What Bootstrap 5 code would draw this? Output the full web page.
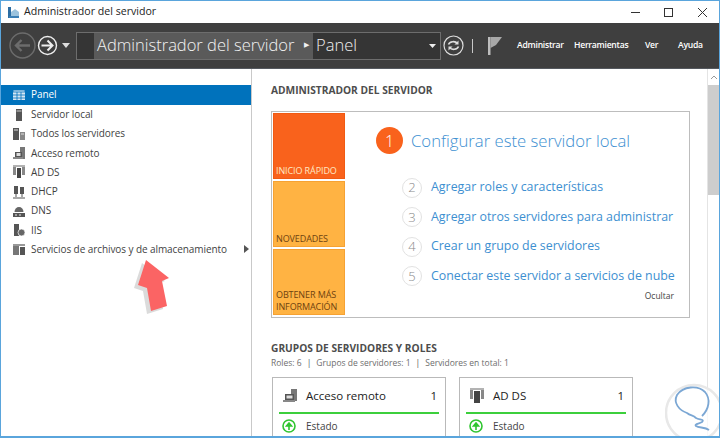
<!DOCTYPE html>
<html lang="es">
<head>
<meta charset="UTF-8">
<title>Administrador del servidor</title>
<link href="https://cdn.jsdelivr.net/npm/bootstrap@5.3.0/dist/css/bootstrap.min.css" rel="stylesheet">
<style>
html, body { height: 100%; overflow: hidden; background: #fff; }
body { font-family: "Open Sans", "Noto Sans", sans-serif; color: #3c3c3c; }
.win { width: 720px; height: 438px; border: 1px solid #5aa5dc; border-bottom-width: 2px; position: relative; overflow: hidden; }
.titlebar { height: 22px; padding-left: 6px; font-size: 10.6px; color: #222; white-space: nowrap; }
.winbtns { margin-left: auto; }
.winbtn { width: 33.5px; height: 22px; }
.toolbar { height: 46px; background: #3f3f3f; border-bottom: 1px solid #55595f; color: #fff; padding-left: 8px; white-space: nowrap; }
.fwd-btn { margin-left: 1px; }
.crumb { width: 365px; height: 28px; margin-left: 6px; border: 1px solid #6d6d6d; background: #353535; font-size: 16.5px; font-weight: 300; color: #f2f2f2; flex: none; }
.crumb-gap { width: 17px; flex: none; }
.crumb-on { background: #5a5a5a; height: 100%; padding: 0 4px 0 3px; width: 219px; flex: none; }
.crumb-sep { font-size: 7px; }
.crumb-last { padding-left: 3px; }
.crumb-drop { margin-left: auto; margin-right: 4px; }
.refresh-btn { margin-left: 2px; }
.tb-sep { width: 1px; height: 14px; background: #c8c8c8; margin: 0 15px 0 8px; }
.tb-menu { font-size: 8.6px; color: #fff; font-weight: 600; letter-spacing: -.25px; flex: none; }
.tb-menus { margin-left: 15px; }
.tb-menus span:nth-child(1) { width: 46px; }
.tb-menus span:nth-child(2) { width: 52px; margin-left: 11px; }
.tb-menus span:nth-child(3) { width: 13px; margin-left: 19px; }
.tb-menus span:nth-child(4) { width: 25px; margin-left: 20px; }
.bodyrow { height: 369px; }
.sidebar { width: 251px; flex: none; border-right: 1px solid #c9c9c9; padding-top: 15.5px; }
.sideitem { height: 19.25px; padding-left: 11px; font-size: 10px; color: #3f3f3f; gap: 5px; letter-spacing: -.08px; white-space: nowrap; }
.sideitem svg { flex: none; width: 14px; height: 14px; }
.sideitem.on { height: 20px; background: #0072bc; color: #fff; margin-bottom: .5px; }
.side-caret { margin-left: auto; margin-right: 2px; width: 0; height: 0; border-left: 5px solid #555; border-top: 4px solid transparent; border-bottom: 4px solid transparent; }
.mainpane { width: 455px; flex: none; padding: 15px 0 0 19px; }
.h-sec { font-size: 10.2px; font-weight: 700; color: #4d4d4d; line-height: 12px; margin: 0; }
.quickbox { width: 419px; height: 207px; border: 1px solid #bdbdbd; margin-top: 15px; padding: 1px; }
.tiles { width: 72px; flex: none; gap: 2px; }
.tile { height: 66px; background: #ffb343; border: 1px solid #f6a233; color: #6e4210; font-size: 9px; line-height: 12px; padding: 0 2px 1px; letter-spacing: -.1px; }
.tile.hot { background: #f9621c; border-color: #f15a12; color: #ffe9c4; }
.quickbody { padding: 14px 0 0 32px; white-space: nowrap; }
.steprow { color: #3d8fd1; font-size: 12.4px; gap: 9px; height: 29.5px; margin-left: 25px; }
.stepnum { width: 20px; height: 20px; border: 1px solid #e2e2e2; border-radius: 50%; color: #8a8a8a; font-size: 13px; font-weight: 300; flex: none; }
.steprow.first { font-size: 16.7px; font-weight: 300; height: 27px; gap: 8px; margin-bottom: 19px; margin-left: -1px; }
.steprow.first .stepnum { width: 27px; height: 27px; background: #f9621c; border: 0; color: #fff; font-size: 16px; }
.hidelink { font-size: 8.5px; color: #444; text-align: right; padding-right: 14px; margin-top: -1px; }
.sub-sec { font-size: 8.5px; color: #6e6e6e; margin-top: 3px; line-height: 12px; }
.sub-sec i { font-style: normal; margin: 0 5px; color: #555; }
.rolecards { gap: 13px; margin: 8px 0 0 1px; }
.rolecard { width: 174px; height: 70px; border: 1px solid #b9b9b9; border-bottom: 0; padding: 0 6px; }
.rolehead { height: 36px; border-bottom: 2px solid #3ccf3c; font-size: 11.5px; color: #222; padding: 2px 2px 0 3px; gap: 8px; }
.rolehead svg { width: 16px; height: 16px; flex: none; }
.rolehead b { font-weight: 400; margin-left: auto; }
.rolestate { font-size: 10px; color: #444; height: 24px; gap: 10px; padding-left: 3px; }
.okdot { width: 14px; height: 14px; flex: none; }
.scroller { width: 12px; flex: none; border-left: 1px solid #e4e4e4; }
.sc-up { height: 16px; }
.sc-thumb { height: 110px; background: #cdcdcd; }
.arrow-over { position: absolute; left: 129px; top: 254px; width: 48px; height: 66px; }
.logo-over { position: absolute; left: 664px; top: 382px; width: 60px; height: 60px; }
</style>
</head>
<body>
<div class="win">
  <div class="titlebar d-flex align-items-center">
    <svg width="13" height="13" viewBox="0 0 13 13" class="me-1"><path d="M1 1h3v11H1z" fill="#2c6da3"/><path d="M4 6l4-3 4 3v5H4z" fill="#9cc3dd"/><path d="M2 10h10v2H2z" fill="#3b7fb5"/></svg>
    <span>Administrador del servidor</span>
    <div class="winbtns d-flex">
      <div class="winbtn d-flex align-items-center justify-content-center"><svg width="11" height="11"><path d="M1 5.5h9" stroke="#333"/></svg></div>
      <div class="winbtn d-flex align-items-center justify-content-center"><svg width="11" height="11"><rect x="1.5" y="1.5" width="8" height="8" fill="none" stroke="#333"/></svg></div>
      <div class="winbtn d-flex align-items-center justify-content-center"><svg width="11" height="11"><path d="M1 1l9 9M10 1l-9 9" stroke="#333"/></svg></div>
    </div>
  </div>

  <div class="toolbar d-flex align-items-center">
    <svg width="27" height="27" viewBox="0 0 27 27"><circle cx="13.5" cy="13.5" r="12.5" fill="none" stroke="#6c6c6c" stroke-width="1.4"/><path d="M21 13.5H7M12.5 8l-5.5 5.5 5.5 5.5" fill="none" stroke="#6c6c6c" stroke-width="2.4"/></svg>
    <svg width="21" height="21" viewBox="0 0 21 21" class="fwd-btn"><circle cx="10.5" cy="10.5" r="9" fill="none" stroke="#eee" stroke-width="1.4"/><path d="M4.5 10.5h11M10.5 5.5l5 5-5 5" fill="none" stroke="#eee" stroke-width="2"/></svg>
    <svg width="8" height="5" class="ms-1"><path d="M0 0h8L4 5z" fill="#ddd"/></svg>
    <div class="crumb d-flex align-items-center">
      <div class="crumb-gap"></div>
      <div class="crumb-on d-flex align-items-center"><span>Administrador del servidor</span><span class="crumb-sep ms-auto">&#9654;</span></div>
      <span class="crumb-last">Panel</span>
      <svg class="crumb-drop" width="7" height="4"><path d="M0 0h7L3.5 4z" fill="#eee"/></svg>
    </div>
    <svg width="21" height="21" viewBox="0 0 21 21" class="refresh-btn"><circle cx="10.5" cy="10.5" r="9.5" fill="none" stroke="#ddd" stroke-width="1.2"/><path d="M5.5 9.5a5 4 0 0 1 9-1M15.5 11.5a5 4 0 0 1-9 1" fill="none" stroke="#ddd" stroke-width="1.6"/><path d="M15.5 5.5v4h-4zM5.5 15.5v-4h4z" fill="#ddd"/></svg>
    <div class="tb-sep"></div>
    <svg width="14" height="18" viewBox="0 0 14 18"><path d="M0 0h2.5v18H0z" fill="#bdbdbd"/><path d="M2.5 0H14L8 8 2.5 11z" fill="#a8a8a8"/></svg>
    <div class="tb-menus d-flex">
      <span class="tb-menu">Administrar</span>
      <span class="tb-menu">Herramientas</span>
      <span class="tb-menu">Ver</span>
      <span class="tb-menu">Ayuda</span>
    </div>
  </div>

  <div class="bodyrow d-flex">
    <div class="sidebar">
      <div class="sideitem on d-flex align-items-center"><svg viewBox="0 0 14 14"><path d="M1 2h12v10H1z" fill="#d5e6f3"/><path d="M1 2h12v2H1zM5 4v8M9 4v8M1 7h12M1 10h12" stroke="#0072bc" stroke-width=".8" fill="none"/></svg>Panel</div>
      <div class="sideitem d-flex align-items-center"><svg viewBox="0 0 14 14"><path d="M4 1h6v12H4z" fill="#555"/><path d="M4.500 3h5" stroke="#ccc"/></svg>Servidor local</div>
      <div class="sideitem d-flex align-items-center"><svg viewBox="0 0 14 14"><path d="M1 1h6v12H1z" fill="#555"/><path d="M8 5h5v8H8z" fill="#888"/><path d="M2 3h4M9 7h3" stroke="#ddd"/></svg>Todos los servidores</div>
      <div class="sideitem d-flex align-items-center"><svg viewBox="0 0 14 14"><path d="M8 1h5v12H8z" fill="#777"/><path d="M3 6h7v5H3z" fill="#555"/><path d="M1 11h10v2H1z" fill="#888"/><path d="M4.5 7h4v3h-4z" fill="#ddd"/></svg>Acceso remoto</div>
      <div class="sideitem d-flex align-items-center"><svg viewBox="0 0 14 14"><path d="M1 2h3v8H1zM10 2h3v8h-3z" fill="#888"/><path d="M5 3h4v10H5z" fill="#444"/><path d="M1 1h12" stroke="#666"/></svg>AD DS</div>
      <div class="sideitem d-flex align-items-center"><svg viewBox="0 0 14 14"><path d="M2 1h4v8H2zM8 2h4v7H8z" fill="#555"/><path d="M4 9v3M1 13h6M10 9v3M7 13h6" stroke="#555"/></svg>DHCP</div>
      <div class="sideitem d-flex align-items-center"><svg viewBox="0 0 14 14"><path d="M2.500 8a4.500 5 0 0 1 9 0z" fill="#666"/><path d="M1 9h12v4H1z" fill="#555"/><path d="M3 11h2M7 11h2" stroke="#eee"/></svg>DNS</div>
      <div class="sideitem d-flex align-items-center"><svg viewBox="0 0 14 14"><path d="M2 1h5v12H2z" fill="#555"/><circle cx="9.500" cy="9.500" r="3.500" fill="#666" stroke="#fff" stroke-width=".7"/></svg>IIS</div>
      <div class="sideitem d-flex align-items-center"><svg viewBox="0 0 14 14"><path d="M1 2h6v11H1z" fill="#777"/><path d="M1 2h12v2H1z" fill="#999"/><path d="M8 5h5v8H8z" fill="#555"/></svg>Servicios de archivos y de almacenamiento<span class="side-caret"></span></div>
    </div>

    <div class="mainpane">
      <h2 class="h-sec">ADMINISTRADOR DEL SERVIDOR</h2>
      <div class="quickbox d-flex">
        <div class="tiles d-flex flex-column">
          <div class="tile hot d-flex align-items-end">INICIO RÁPIDO</div>
          <div class="tile d-flex align-items-end">NOVEDADES</div>
          <div class="tile d-flex align-items-end">OBTENER MÁS INFORMACIÓN</div>
        </div>
        <div class="quickbody flex-grow-1">
          <div class="steprow first d-flex align-items-center"><span class="stepnum d-flex align-items-center justify-content-center">1</span>Configurar este servidor local</div>
          <div class="steprow d-flex align-items-center"><span class="stepnum d-flex align-items-center justify-content-center">2</span>Agregar roles y características</div>
          <div class="steprow d-flex align-items-center"><span class="stepnum d-flex align-items-center justify-content-center">3</span>Agregar otros servidores para administrar</div>
          <div class="steprow d-flex align-items-center"><span class="stepnum d-flex align-items-center justify-content-center">4</span>Crear un grupo de servidores</div>
          <div class="steprow d-flex align-items-center"><span class="stepnum d-flex align-items-center justify-content-center">5</span>Conectar este servidor a servicios de nube</div>
          <div class="hidelink">Ocultar</div>
        </div>
      </div>
      <h2 class="h-sec mt-4">GRUPOS DE SERVIDORES Y ROLES</h2>
      <div class="sub-sec">Roles: 6<i>|</i>Grupos de servidores: 1<i>|</i>Servidores en total: 1</div>
      <div class="rolecards d-flex">
        <div class="rolecard">
          <div class="rolehead d-flex align-items-center"><svg viewBox="0 0 16 16"><path d="M9 1h6v12H9z" fill="#777"/><path d="M3 6h9v6H3z" fill="#555"/><path d="M1 12h12v2H1z" fill="#888"/><path d="M4.500 7.500h6v3h-6z" fill="#ddd"/></svg>Acceso remoto<b>1</b></div>
          <div class="rolestate d-flex align-items-center"><svg class="okdot" viewBox="0 0 14 14"><circle cx="7" cy="7" r="6" fill="none" stroke="#2fc52f" stroke-width="1.600"/><path d="M7 11V6M4.500 7L7 4l2.500 3z" stroke="#2fc52f" stroke-width="1.600" fill="#2fc52f"/></svg>Estado</div>
        </div>
        <div class="rolecard">
          <div class="rolehead d-flex align-items-center"><svg viewBox="0 0 16 16"><path d="M1 2h3v9H1zM12 2h3v9h-3z" fill="#888"/><path d="M5 3h6v12H5z" fill="#444"/><path d="M1 1h14" stroke="#666"/></svg>AD DS<b>1</b></div>
          <div class="rolestate d-flex align-items-center"><svg class="okdot" viewBox="0 0 14 14"><circle cx="7" cy="7" r="6" fill="none" stroke="#2fc52f" stroke-width="1.600"/><path d="M7 11V6M4.500 7L7 4l2.500 3z" stroke="#2fc52f" stroke-width="1.600" fill="#2fc52f"/></svg>Estado</div>
        </div>
      </div>
    </div>

    <div class="scroller">
      <div class="sc-up d-flex align-items-center justify-content-center"><svg width="8" height="5"><path d="M1 4l3-3 3 3" fill="none" stroke="#999"/></svg></div>
      <div class="sc-thumb"></div>
    </div>
  </div>

  <svg class="arrow-over" viewBox="0 0 48 66"><path d="M16 5L39 23 32 26 37 51 21 56 17 33 8 30z" fill="#999" opacity=".35" transform="translate(-4 3)"/><path d="M16 5L39 23 32 26 37 51 21 56 17 33 8 30z" fill="#fb6464"/></svg>
  <svg class="logo-over" viewBox="0 0 60 60"><circle cx="29" cy="30" r="28" fill="#fff" fill-opacity=".75" stroke="#e8e8e8" stroke-width="2.500"/><path d="M37 33C44 26 46 16 40 9 33 2 18 3 12 12 8 20 14 27 22 30 26 33 28 32 31 35 34 37 40 36 37 39 34 41 29 41 31 43 34 45 40 44 44 47" fill="none" stroke="#7ba7d4" stroke-width="1.800"/></svg>
</div>
</body>
</html>
